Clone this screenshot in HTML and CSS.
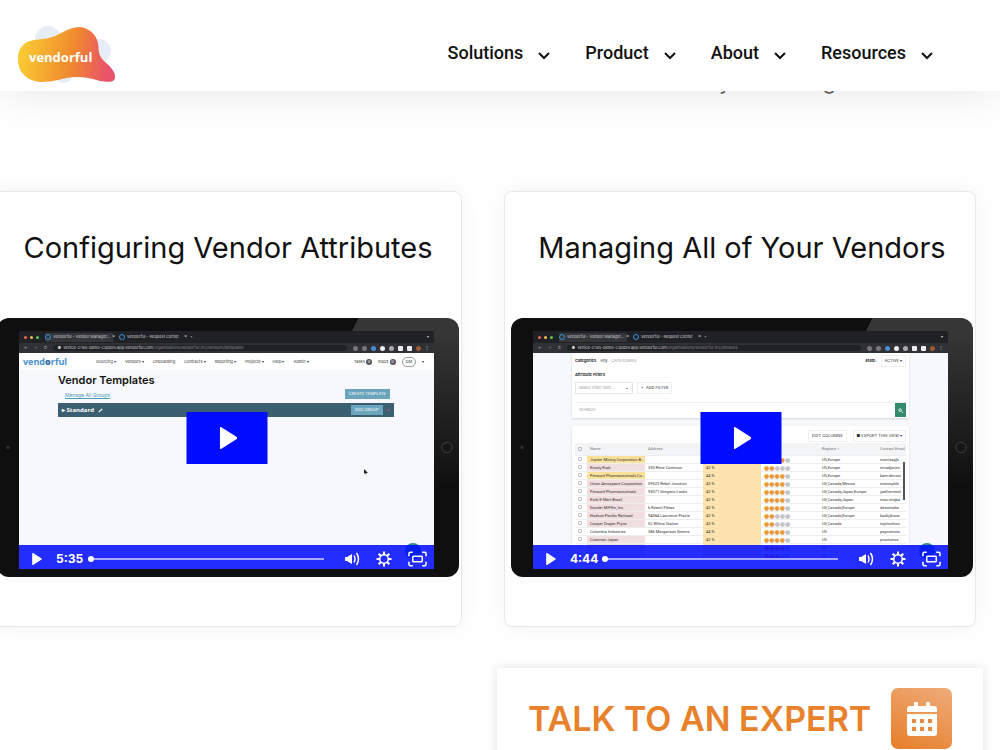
FILE: index.html
```html
<!DOCTYPE html>
<html lang="en">
<head>
    <meta charset="UTF-8">
    <meta name="viewport" content="width=device-width, initial-scale=1.0">
    <title>Vendorful - Vendor Management</title>
    <link rel="stylesheet" href="styles.css">
</head>
<body>
    <svg class="sprite" aria-hidden="true">
        <symbol id="chevron" viewBox="0 0 14 9"><path d="M2 2l5 5 5-5" fill="none" stroke="#111" stroke-width="2"/></symbol>
        <symbol id="play" viewBox="0 0 16 20"><path d="M1 1l14 9-14 9z" fill="#fff" stroke="#fff" stroke-width="2" stroke-linejoin="round"/></symbol>
        <symbol id="volume" viewBox="0 0 16 16"><path d="M1 6h2l5-3v10l-5-3H1z" fill="#fff"/><path d="M10 4.500q2 3.500 0 7M12.500 2q4 6 0 12" fill="none" stroke="#fff" stroke-width="1.500"/></symbol>
        <symbol id="gear" viewBox="0 0 16 16"><circle cx="8" cy="8" r="4.300" fill="none" stroke="#fff" stroke-width="1.600"/><path d="M8 .5v3M8 12.500v3M.5 8h3M12.500 8h3M2.700 2.700l2.100 2.100M11.200 11.200l2.100 2.100M13.300 2.700l-2.100 2.100M4.800 11.200l-2.100 2.100" stroke="#fff" stroke-width="2"/></symbol>
        <symbol id="fullscreen" viewBox="0 0 20 16"><path d="M1 5V2.500Q1 1 2.500 1H5M15 1h2.500Q19 1 19 2.500V5M19 11v2.500q0 1.500-1.500 1.500H15M5 15H2.500Q1 15 1 13.500V11" fill="none" stroke="#fff" stroke-width="1.600"/><rect x="5" y="5" width="10" height="6" rx="1" fill="none" stroke="#fff" stroke-width="1.600"/></symbol>
    </svg>

    <header>
        <a class="logo" href="#" aria-label="Vendorful">
            <svg viewBox="16 24 102 60" width="102" height="60">
                <defs>
                    <linearGradient id="blob" x1="0" y1="0" x2="1" y2=".1">
                        <stop offset="0" stop-color="#fbd434"/>
                        <stop offset=".6" stop-color="#f08a2e"/>
                        <stop offset="1" stop-color="#e9516c"/>
                    </linearGradient>
                </defs>
                <g fill="#e6edf7">
                    <circle cx="48" cy="39" r="13"/>
                    <circle cx="99" cy="51" r="12"/>
                    <circle cx="64" cy="74" r="9"/>
                </g>
                <path d="M18 62C17 50 22 42 34 40C47 39 54 37 61 33C68 29 74 27 80 27C89 28 96 34 98 43C99 51 98 55 104 61C110 66 116 72 115 78C114 83 107 82 100 81C88 77 76 76 66 78C55 81 48 82 40 82C28 81 19 73 18 62Z" fill="url(#blob)"/>
                <text class="logo-text" x="29" y="62">vendorful</text>
            </svg>
        </a>
        <nav>
            <a href="#">Solutions <svg class="chevron"><use href="#chevron"/></svg></a>
            <a href="#">Product <svg class="chevron"><use href="#chevron"/></svg></a>
            <a href="#">About <svg class="chevron"><use href="#chevron"/></svg></a>
            <a href="#">Resources <svg class="chevron"><use href="#chevron"/></svg></a>
        </nav>
    </header>

    <main>
        <p class="intro"><span>y</span><span>g</span></p>

        <section class="cards">
            <article class="card">
                <h2>Configuring Vendor Attributes</h2>
                <div class="tablet">
                    <div class="video">
                        <div class="browser-tabs">
                            <i class="dot red"></i><i class="dot yellow"></i><i class="dot green"></i>
                            <span class="tab active">Vendorful - Vendor Manager&hellip; <b>&times;</b></span>
                            <span class="tab">Vendorful - Request Center <b>&times;</b></span>
                            <span>+</span>
                            <span class="push">&#9662;</span>
                        </div>
                        <div class="browser-url">
                            <span>&#8592;</span><span class="dim">&#8594;</span><span>&#8635;</span>
                            <span class="address">&#9679;&nbsp; venice-2785-demo-c3pd26.app.vendorful.com<em>/organizations/vendorful-inc/vendors/templates</em></span>
                            <span class="extensions"><i></i><i></i><i class="blue"></i><i class="white"></i><i class="grey"></i><i class="white small"></i><i class="white small"></i><i class="brown"></i>&#8942;</span>
                        </div>
                        <div class="app-nav">
                            <strong>vend<b>o</b>rful</strong>
                            <span>Sourcing &#9662;</span><span>Vendors &#9662;</span><span>Onboarding</span><span>Contracts &#9662;</span><span>Reporting &#9662;</span><span>Projects &#9662;</span><span>Help &#9662;</span><span>Admin &#9662;</span>
                            <span class="account"><span>Tasks <i class="count">0</i></span><span>Inbox <i class="count">0</i></span><span class="user">DM</span><span>&#9662;</span></span>
                        </div>
                        <div class="templates">
                            <h3>Vendor Templates</h3>
                            <div class="templates-actions">
                                <a href="#">Manage All Groups</a>
                                <button>CREATE TEMPLATE</button>
                            </div>
                            <div class="group">
                                <span>&#9656; Standard</span>
                                <svg viewBox="0 0 6 6" width="5" height="5"><path d="M1 5l4-4" stroke="#fff" stroke-width="1.500"/></svg>
                                <button>ADD GROUP</button>
                                <span class="remove">&times;</span>
                            </div>
                            <svg class="cursor" viewBox="0 0 4 6"><path d="M0 0l4 4H2l1 2-2-2-1 1z" fill="#222"/></svg>
                        </div>
                        <i class="help"></i>
                        <button class="big-play" aria-label="Play video"><svg viewBox="0 0 16 20" width="18" height="22"><use href="#play"/></svg></button>
                        <div class="controls">
                            <button aria-label="Play"><svg width="10" height="12"><use href="#play"/></svg></button>
                            <time>5:35</time>
                            <input type="range" value="0" aria-label="Playbar">
                            <button aria-label="Volume"><svg width="16" height="16"><use href="#volume"/></svg></button>
                            <button aria-label="Settings"><svg width="16" height="16"><use href="#gear"/></svg></button>
                            <button aria-label="Fullscreen"><svg width="19" height="16"><use href="#fullscreen"/></svg></button>
                        </div>
                    </div>
                </div>
            </article>

            <article class="card">
                <h2>Managing All of Your Vendors</h2>
                <div class="tablet">
                    <div class="video">
                        <div class="browser-tabs">
                            <i class="dot red"></i><i class="dot yellow"></i><i class="dot green"></i>
                            <span class="tab active">Vendorful - Vendor Manager&hellip; <b>&times;</b></span>
                            <span class="tab">Vendorful - Request Center <b>&times;</b></span>
                            <span>+</span>
                            <span class="push">&#9662;</span>
                        </div>
                        <div class="browser-url">
                            <span>&#8592;</span><span class="dim">&#8594;</span><span>&#8635;</span>
                            <span class="address">&#9679;&nbsp; venice-2785-demo-c3pd26.app.vendorful.com<em>/organizations/vendorful-inc/vendors</em></span>
                            <span class="extensions"><i></i><i></i><i class="blue"></i><i class="white"></i><i class="grey"></i><i class="white small"></i><i class="white small"></i><i class="brown"></i>&#8942;</span>
                        </div>
                        <div class="vendors">
                            <div class="panel filters">
                                <div class="line">
                                    <b>Categories</b><span>Any</span><span class="muted">CATEGORIES</span>
                                    <b class="push">State:</b><button>ACTIVE &#9662;</button>
                                </div>
                                <b class="label">Attribute Filters</b>
                                <div class="line">
                                    <select aria-label="Filter"><option>Select Filter Item...</option></select>
                                    <button>+ &nbsp;ADD FILTER</button>
                                </div>
                                <div class="search">
                                    <input type="text" placeholder="SEARCH" aria-label="Search vendors">
                                    <button aria-label="Search"><svg viewBox="0 0 6 6" width="5" height="5"><circle cx="2.500" cy="2.500" r="1.500" fill="none" stroke="#fff"/><path d="M4 4l2 2" stroke="#fff"/></svg></button>
                                </div>
                            </div>
                            <div class="panel results">
                                <div class="toolbar">
                                    <button>EDIT COLUMNS</button>
                                    <button>&#9632; EXPORT THIS VIEW &#9662;</button>
                                </div>
                                <table>
                                    <colgroup><col class="c-check"><col class="c-name"><col class="c-name"><col class="c-name"><col class="c-name"><col class="c-name"><col></colgroup>
                                    <thead>
                                        <tr><th><i class="box"></i></th><th>Name</th><th>Address</th><th>Score</th><th>Rating</th><th>Regions &#8597;</th><th>Contact Email</th></tr>
                                    </thead>
                                    <tbody id="vendorRows"></tbody>
                                </table>
                                <i class="scrollbar"></i>
                            </div>
                        </div>
                        <i class="help"></i>
                        <button class="big-play" aria-label="Play video"><svg viewBox="0 0 16 20" width="18" height="22"><use href="#play"/></svg></button>
                        <div class="controls">
                            <button aria-label="Play"><svg width="10" height="12"><use href="#play"/></svg></button>
                            <time>4:44</time>
                            <input type="range" value="0" aria-label="Playbar">
                            <button aria-label="Volume"><svg width="16" height="16"><use href="#volume"/></svg></button>
                            <button aria-label="Settings"><svg width="16" height="16"><use href="#gear"/></svg></button>
                            <button aria-label="Fullscreen"><svg width="19" height="16"><use href="#fullscreen"/></svg></button>
                        </div>
                    </div>
                </div>
            </article>
        </section>

        <a class="expert" href="#">
            <span>TALK TO AN EXPERT</span>
            <span class="expert-icon">
                <svg viewBox="0 0 30 34" width="30" height="34">
                    <path d="M3 4h4V1q0-1 1-1h2q1 0 1 1v3h8V1q0-1 1-1h2q1 0 1 1v3h4q3 0 3 3v3H0V7q0-3 3-3z" fill="#fff"/>
                    <path d="M0 12h30v19q0 3-3 3H3q-3 0-3-3z" fill="#fff"/>
                    <path d="M5 17h4v4H5zM13 17h4v4h-4zM21 17h4v4h-4zM5 25h4v4H5zM13 25h4v4h-4zM21 25h4v4h-4z" fill="#e98b41"/>
                </svg>
            </span>
        </a>
    </main>

    <script>
        // name, address, score, stars, regions, contact, row colour
        const vendors = [
            ['Jupiter Mining Corporation B...', '', '42 %', 4, 'US,Europe', 'morrisayjb', 'gold'],
            ['Krusty Krab', '330 Rene Common', '42 %', 2, 'US,Europe', 'renadjones', 'pink'],
            ['Prescott Pharmaceuticals Co...', '', '44 %', 4, 'US,Europe', 'kam-denwo', 'gold'],
            ['Union Aerospace Corporation', '09523 Rebel Junction', '43 %', 4, 'US,Canada,Mexico', 'monroyble', 'pink'],
            ['Prescott Pharmaceuticals', '93071 Gregorio Locks', '42 %', 4, 'US,Canada,Japan,Europe', 'yadfrorrend', 'pink'],
            ['Kwik-E-Mart Brazil', '', '42 %', 4, 'US,Canada,Japan', 'max.nriqba', 'pink'],
            ['Gunder MiFflin, Inc.', '6 Keanti Fiktas', '42 %', 4, 'US,Canada,Europe', 'desomaba', 'pink'],
            ['Hudson Pacific Railroad', '94084 Lawrence Prairie', '42 %', 2, 'US,Canada,Europe', 'badtyikoos', 'pink'],
            ['Cooper Draper Pryce', '52 Wilma Station', '43 %', 2, 'US,Canada', 'topfomhou', 'pink'],
            ['Columbia Industries', '386 Margarison Greens', '44 %', 4, 'US', 'paynomotu', ''],
            ['Cutamon Japan', '', '42 %', 4, 'US', 'proctoews', 'pink'],
            ['', '', '', 4, 'US', '', 'pink'],
            ['', '', '', 3, 'US', '', 'pink']
        ];

        document.getElementById('vendorRows').innerHTML = vendors.map(([name, address, score, stars, regions, contact, colour]) => `
            <tr>
                <td><i class="box"></i></td>
                <td class="${colour}">${name}</td>
                <td>${address}</td>
                <td class="score">${score}</td>
                <td class="stars">${'●'.repeat(stars)}<s>${'●'.repeat(5 - stars)}</s></td>
                <td>${regions}</td>
                <td>${contact}</td>
            </tr>`).join('');
    </script>
</body>
</html>
```
FILE: styles.css
```css
* {
    box-sizing: border-box;
}
body {
    margin: 0;
    height: 100vh;
    overflow: hidden;
    font-family: Inter, Arial, sans-serif;
    background-color: #fff;
}
button, input, select {
    font: inherit;
    color: inherit;
    margin: 0;
    padding: 0;
    border: none;
    background: none;
}
button {
    cursor: pointer;
}
svg {
    display: block;
    flex: none;
}
i {
    display: block;
    font-style: normal;
}
.sprite {
    width: 0;
    height: 0;
    position: absolute;
}
.push {
    margin-left: auto;
}

/* header */
header {
    position: relative;
    z-index: 2;
    height: 91px;
    padding: 0 66px 0 16px;
    display: flex;
    justify-content: space-between;
    align-items: center;
    background-color: #fff;
    box-shadow: 0 0 50px rgba(0, 0, 0, 0.1);
}
.logo {
    padding-top: 17px;
}
.logo-text {
    font: bold 13px "Open Sans", sans-serif;
    fill: #fff;
}
nav {
    display: flex;
    gap: 34px;
    padding-bottom: 16px;
    margin-top: 32px;
    align-self: flex-start;
}
nav a {
    display: flex;
    align-items: center;
    gap: 14px;
    font: 500 18px/42px Roboto, sans-serif;
    color: #111;
    text-decoration: none;
}
.chevron {
    width: 14px;
    height: 9px;
    margin-top: 4px;
}

/* page */
.intro {
    display: flex;
    gap: 91px;
    margin: -24px 0 0 719px;
    height: 124px;
    font-size: 22px;
    line-height: 28px;
    color: #666;
}
.cards {
    display: grid;
    grid-template-columns: 1fr 1fr;
    gap: 42px;
    margin: 0 24px 0 -10px;
}
.card {
    min-width: 0;
    padding: 36px 2px 49px 6px;
    background-color: #fff;
    border: 1px solid #e8e8e8;
    border-radius: 8px;
    box-shadow: 0 0 24px rgba(0, 0, 0, 0.05);
}
.card h2 {
    margin: 0 0 51px;
    font-size: 29px;
    line-height: 39px;
    font-weight: 400;
    text-align: center;
    white-space: nowrap;
    color: #111;
}

/* tablet */
.tablet {
    padding: 13px 25px 8px 22px;
    border-radius: 12px;
    background:
        radial-gradient(circle at calc(100% - 12px) 50%, #151515 4px, #3a3a3a 5px, transparent 6px),
        radial-gradient(circle at 11px 50%, #333 1px, transparent 2px),
        linear-gradient(to bottom, transparent 5%, #0f0f0f 65%),
        linear-gradient(115deg, #0f0f0f 62%, #363636 62%);
}
.video {
    position: relative;
    display: flex;
    flex-direction: column;
    aspect-ratio: 415 / 238;
    overflow: hidden;
    background-color: #f7f8fb;
    font-size: 4px;
    line-height: 6px;
    color: #333;
}
.browser-tabs, .browser-url {
    display: flex;
    flex: none;
    align-items: center;
    background-color: #202124;
    color: #ccc;
    white-space: nowrap;
}
.browser-tabs {
    height: 12px;
    padding: 0 5px;
    gap: 3px;
}
.dot {
    width: 3px;
    height: 3px;
    border-radius: 50%;
}
.red {
    background-color: #ed6a5e;
}
.yellow {
    background-color: #f5bf4f;
}
.green {
    background-color: #61c554;
}
.tab {
    display: flex;
    align-items: center;
    gap: 2px;
    width: 68px;
    height: 9px;
    margin-left: 3px;
}
.tab::before {
    content: "";
    flex: none;
    width: 4px;
    height: 4px;
    border: 1px solid #3c8fdc;
    border-radius: 50%;
}
.tab b {
    margin-left: auto;
}
.tab.active {
    background-color: #35363a;
}
.browser-url {
    height: 10px;
    padding: 0 5px;
    gap: 6px;
    background-color: #303135;
}
.dim, .browser-url em {
    color: #888;
    font-style: normal;
}
.address {
    flex: 1;
    padding-left: 4px;
    background-color: #202124;
    border-radius: 4px;
}
.extensions {
    display: flex;
    align-items: center;
    gap: 4px;
}
.extensions i {
    width: 5px;
    height: 5px;
    border-radius: 50%;
    background-color: #777;
}
.extensions .blue {
    background-color: #4a8ad4;
}
.extensions .white {
    background-color: #eee;
}
.extensions .grey {
    background-color: #aaa;
}
.extensions .small {
    border-radius: 1px;
}
.extensions .brown {
    background-color: #9c5a3c;
}

/* vendor templates screen */
.app-nav {
    display: flex;
    flex: none;
    align-items: center;
    gap: 9px;
    height: 17px;
    padding: 0 10px 0 4px;
    background-color: #fff;
    white-space: nowrap;
}
.app-nav strong {
    font: bold 9px/12px "Open Sans", sans-serif;
    color: #4a90c8;
    margin-right: 20px;
}
.app-nav strong b {
    color: #2765a5;
}
.account {
    display: flex;
    align-items: center;
    gap: 6px;
    margin-left: auto;
}
.count {
    display: inline-block;
    width: 6px;
    border-radius: 3px;
    background-color: #555;
    color: #fff;
    text-align: center;
}
.user {
    padding: 1px 3px;
    border: 1px solid #999;
    border-radius: 5px;
}
.templates {
    position: relative;
    flex: 1;
    padding: 4px 40px 0 39px;
}
.templates h3 {
    margin: 0;
    font-size: 11px;
    line-height: 13px;
    font-weight: 600;
    color: #111;
}
.templates-actions {
    display: flex;
    justify-content: space-between;
    align-items: center;
    padding: 2px 4px 4px 7px;
}
.templates-actions a {
    font-size: 5px;
    color: #4a9bbd;
    margin-top: 2px;
}
.templates button {
    padding: 2px 4px;
    background-color: #6aa5bd;
    color: #fff;
}
.group {
    display: flex;
    align-items: center;
    gap: 4px;
    height: 14px;
    padding: 0 4px;
    background-color: #3b5f70;
    color: #fff;
    font: bold 6px/10px "Open Sans", sans-serif;
}
.group button {
    margin-left: auto;
    font: 4px/6px Inter, sans-serif;
}
.remove {
    color: #b0607a;
}
.cursor {
    position: absolute;
    left: 345px;
    top: 99px;
    width: 4px;
    height: 6px;
}

/* vendors screen */
.vendors {
    display: flex;
    flex-direction: column;
    flex: 1;
    min-height: 0;
    gap: 8px;
    padding: 0 39px;
}
.panel {
    background-color: #fff;
    box-shadow: 0 1px 2px rgba(0, 0, 0, 0.15);
}
.filters {
    flex: none;
    padding: 2px 3px 1px;
}
.line {
    display: flex;
    align-items: center;
    gap: 4px;
}
.line b, .label {
    font-weight: 600;
    color: #111;
}
.muted {
    color: #999;
}
.label {
    display: block;
    margin: 5px 0 4px;
}
.filters .line button, .toolbar button {
    padding: 2px 3px;
    border: 1px solid #eee;
}
.filters select {
    appearance: none;
    width: 58px;
    height: 12px;
    padding: 0 3px;
    border: 1px solid #e4e4e4;
    color: #999;
    background: linear-gradient(#999, #999) no-repeat calc(100% - 4px) 50% / 2px 1px;
}
.search {
    display: flex;
    justify-content: space-between;
    height: 15px;
    margin-top: 8px;
    border-top: 1px solid #eee;
}
.search input {
    flex: 1;
    min-width: 0;
    padding: 0 4px;
}
.search input::placeholder {
    color: #999;
}
.search button {
    padding: 0 3px;
    background-color: #348a6d;
}
.results {
    position: relative;
    flex: 1;
    min-height: 0;
    padding: 2px 3px 0;
}
.toolbar {
    display: flex;
    justify-content: flex-end;
    gap: 6px;
    height: 15px;
    align-items: center;
}
table {
    width: 100%;
    table-layout: fixed;
    border-collapse: collapse;
    font-family: Roboto, sans-serif;
}
.c-check {
    width: 12px;
}
.c-name {
    width: 58px;
}
th, td {
    height: 8px;
    padding: 0 0 0 3px;
    border-bottom: 1px solid #eee;
    line-height: 7px;
    text-align: left;
    white-space: nowrap;
    overflow: hidden;
}
th {
    height: 12px;
    background-color: #f3f4f5;
    font-weight: 400;
    color: #777;
}
.box {
    width: 4px;
    height: 4px;
    border: 1px solid #bbb;
    border-radius: 1px;
}
.gold {
    background-color: #fbe29a;
}
.pink {
    background-color: #f1dede;
}
.score {
    background-color: #fde3b0;
    border-color: #fde3b0;
}
.stars {
    font: 6px/7px "DejaVu Sans", sans-serif;
    color: #e9983a;
}
.stars s {
    color: #c4c4c8;
    text-decoration: none;
}
.scrollbar {
    position: absolute;
    right: 4px;
    top: 36px;
    width: 2px;
    height: 38px;
    background-color: #555;
}

/* player */
.help {
    position: absolute;
    right: 13px;
    bottom: 10px;
    width: 16px;
    height: 16px;
    border-radius: 50%;
    background-color: #348a8d;
}
.big-play {
    position: absolute;
    left: 50%;
    top: 45%;
    transform: translate(-50%, -50%);
    display: flex;
    justify-content: center;
    align-items: center;
    width: 81px;
    height: 52px;
    padding-left: 4px;
    background-color: #000cff;
}
.controls {
    position: absolute;
    left: 0;
    right: 0;
    bottom: 0;
    display: flex;
    align-items: center;
    height: 24px;
    padding: 4px 7px 0 13px;
    gap: 16px;
    background-color: rgba(0, 12, 255, 0.86);
    color: #fff;
}
.controls time {
    width: 28px;
    margin-left: -2px;
    margin-right: -12px;
    font: bold 12px/16px Inter, sans-serif;
}
.controls input {
    appearance: none;
    flex: 1;
    min-width: 0;
    height: 6px;
    margin-right: 4px;
    background: linear-gradient(#a7abff, #a7abff) no-repeat center / 100% 2px;
}
.controls input::-webkit-slider-thumb {
    appearance: none;
    width: 6px;
    height: 6px;
    border-radius: 50%;
    background-color: #fff;
}

/* call to action */
.expert {
    display: flex;
    justify-content: space-between;
    align-items: center;
    width: fit-content;
    min-width: 486px;
    margin: 41px 17px 0 auto;
    padding: 20px 31px;
    background-color: #fff;
    box-shadow: 0 0 10px rgba(0, 0, 0, 0.12);
    color: #e8812b;
    font-size: 34px;
    font-weight: 600;
    text-decoration: none;
    white-space: nowrap;
}
.expert-icon {
    display: flex;
    justify-content: center;
    align-items: center;
    width: 61px;
    height: 61px;
    border-radius: 7px;
    background: linear-gradient(25deg, #e67e28, #efac7a);
}
```
